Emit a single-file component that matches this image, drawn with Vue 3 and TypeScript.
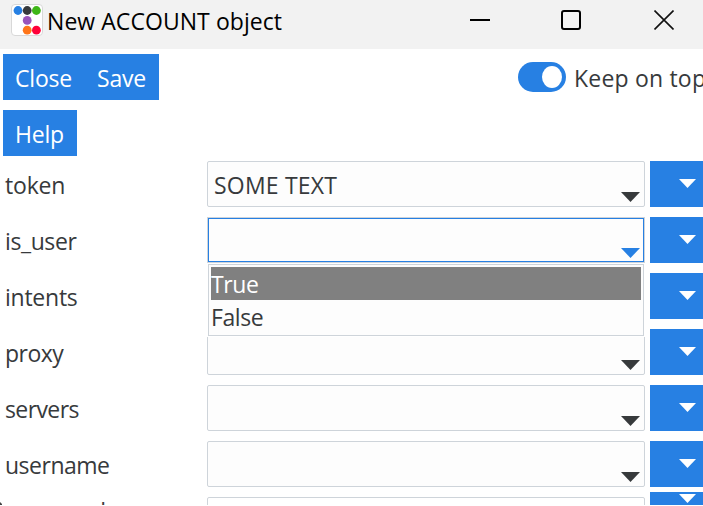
<script setup lang="ts">
import { ref } from 'vue'

interface Field {
  name: string
  value: string
  spacing: number
}

const fields: Field[] = [
  { name: 'token', value: 'SOME TEXT', spacing: -0.2 },
  { name: 'is_user', value: '', spacing: -0.4 },
  { name: 'intents', value: '', spacing: -0.25 },
  { name: 'proxy', value: '', spacing: -0.5 },
  { name: 'servers', value: '', spacing: -0.6 },
  { name: 'username', value: '', spacing: -0.5 },
  { name: 'password', value: '', spacing: -0.4 },
]
const options = ['True', 'False']
const opened = ref('is_user')
const highlighted = ref('True')
const onTop = ref(true)
</script>

<template>
  <div class="window">
    <header class="titlebar">
      <svg class="logo" width="32" height="32" viewBox="0 0 32 32">
        <rect x="0.5" y="0.5" width="31" height="31" rx="3.5" fill="#fff" stroke="#d8d8d8" />
        <circle cx="7" cy="6.5" r="4.4" fill="#2780e3" />
        <circle cx="16.2" cy="6.5" r="4.4" fill="#373a3c" />
        <circle cx="25.4" cy="6.5" r="4.4" fill="#3fb618" />
        <circle cx="16.2" cy="16.4" r="4.4" fill="#9954bb" />
        <circle cx="16.2" cy="26.2" r="4.4" fill="#ff7518" />
        <circle cx="25.4" cy="26.2" r="4.4" fill="#ff0039" />
      </svg>
      <h1 class="title">New ACCOUNT object</h1>
      <div class="controls">
        <svg width="20" height="20" viewBox="0 0 20 20"><path d="M0 10H20" stroke="#000" stroke-width="2" /></svg>
        <svg width="20" height="20" viewBox="0 0 20 20"><rect x="1" y="1" width="18" height="18" rx="2" fill="none" stroke="#000" stroke-width="2" /></svg>
        <svg width="20" height="20" viewBox="0 0 20 20"><path d="M.5 .5L19.5 19.5M19.5 .5L.5 19.5" stroke="#111" stroke-width="1.6" /></svg>
      </div>
    </header>

    <div class="toolbar">
      <button class="btn close">Close</button>
      <button class="btn save">Save</button>
      <label class="keep" @click="onTop = !onTop">
        <span class="toggle" :class="{ on: onTop }"><span class="knob"></span></span>
        <span class="keep-text">Keep on top</span>
      </label>
    </div>
    <div class="toolbar second">
      <button class="btn help">Help</button>
    </div>

    <main class="form">
      <div v-for="f in fields" :key="f.name" class="row" :class="{ partial: f.name === 'password' }">
        <span class="name" :style="{ letterSpacing: f.spacing + 'px' }">{{ f.name }}</span>
        <div class="combo" :class="{ active: opened === f.name }">
          <span class="value">{{ f.value }}</span>
          <svg class="arrow" width="19" height="10" viewBox="0 0 19 10"><path d="M0 0H19L9.5 10Z" fill="currentColor" /></svg>
          <ul v-if="opened === f.name" class="list">
            <li v-for="o in options" :key="o" :class="{ selected: highlighted === o }">{{ o }}</li>
          </ul>
        </div>
        <button class="menu">
          <svg width="17" height="9" viewBox="0 0 17 9"><path d="M0 0H17L8.5 9Z" fill="#fff" /></svg>
        </button>
      </div>
    </main>
    <svg class="pointer" width="2" height="3" viewBox="0 0 2 3"><path d="M0 0L2 2V3H0Z" fill="#444" /></svg>
  </div>
</template>

<style>
body {
  background: #fff;
  overflow: hidden;
}
</style>

<style scoped>
.window {
  position: relative;
  width: 703px;
  height: 505px;
  overflow: hidden;
  box-sizing: border-box;
  font: 23px/32px "Open Sans", "Noto Sans", sans-serif;
  letter-spacing: -0.4px;
  color: #373a3c;
  white-space: nowrap;
}
.titlebar {
  display: flex;
  height: 49px;
  background: #f2f2f2;
}
.logo {
  margin: 4px 4px 0 11px;
  flex: none;
}
.title {
  margin: 5px 0 0;
  font-size: 23px;
  font-weight: 400;
  line-height: 32px;
  letter-spacing: 0.06px;
  color: #000;
}
.controls {
  display: flex;
  gap: 73px;
  margin: 10px 29px 0 auto;
}
.controls svg:first-child {
  margin-right: -2px;
}
.toolbar {
  display: flex;
  height: 46px;
  padding: 5px 0 0 3px;
}
.second {
  padding-top: 10px;
}
.btn {
  height: 46px;
  margin: 0;
  padding: 1px 0 0 12px;
  border: 0;
  background: #2780e3;
  color: #fff;
  font: inherit;
  letter-spacing: -0.2px;
  text-align: left;
  flex: none;
}
.close {
  width: 82px;
}
.save {
  width: 74px;
}
.help {
  width: 74px;
}
.keep {
  display: flex;
  margin-left: 359px;
}
.toggle {
  flex: none;
  display: flex;
  box-sizing: border-box;
  width: 48px;
  height: 30px;
  margin-top: 8px;
  padding: 4px;
  border-radius: 15px;
  background: #adb5bd;
}
.toggle.on {
  justify-content: flex-end;
  background: #2780e3;
}
.knob {
  width: 20px;
  height: 22px;
  border-radius: 50%;
  background: #fff;
}
.keep-text {
  margin: 8px 0 0 8px;
  letter-spacing: 0.2px;
}
.form {
  padding-top: 5px;
}
.row {
  display: flex;
  height: 46px;
  margin-bottom: 10px;
}
.name {
  width: 202px;
  padding-top: 8px;
  margin-left: 5px;
  flex: none;
}
.combo {
  position: relative;
  box-sizing: border-box;
  width: 438px;
  height: 46px;
  margin-right: 5px;
  padding: 8px 4px 0 6px;
  border: 1px solid #ced4da;
  border-radius: 2px;
  background: #fdfdfd;
  display: flex;
  justify-content: space-between;
  flex: none;
}
.value {
  line-height: 30px;
  letter-spacing: 0.2px;
}
.arrow {
  margin-top: 22px;
}
.active {
  color: #2780e3;
  border-radius: 0;
  box-shadow: inset 0 0 0 1px #2780e3;
}
.list {
  position: absolute;
  z-index: 1;
  top: 46px;
  left: 0;
  box-sizing: border-box;
  width: 436px;
  height: 72px;
  margin: 0;
  padding: 2px;
  border: 1px solid #ced4da;
  background: #fdfdfd;
  color: #373a3c;
  list-style: none;
  box-shadow: 0 0 0 1px #fff;
}
.list li {
  height: 33px;
  line-height: 35px;
}
.list .selected {
  width: 430px;
  background: #808080;
  color: #fff;
}
.menu {
  width: 53px;
  height: 46px;
  margin: 0;
  padding: 18px 0 0 29px;
  border: 0;
  background: #2780e3;
  display: flex;
  align-items: flex-start;
  flex: none;
}
.partial .name {
  padding-top: 0;
  margin-top: -2px;
}
.partial .combo {
  background: #fff;
}
.partial .menu {
  margin-top: -5px;
  padding-top: 2px;
}
.partial .arrow {
  visibility: hidden;
}
.pointer {
  position: absolute;
  left: 0;
  bottom: 0;
}
</style>
